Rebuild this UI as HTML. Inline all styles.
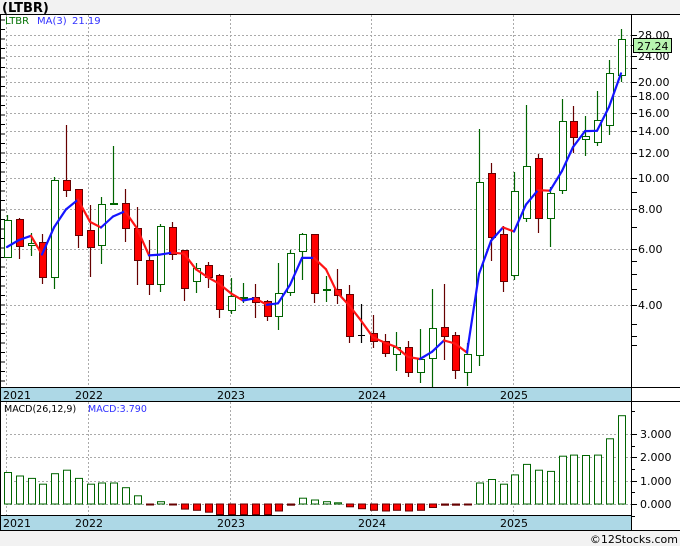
<!DOCTYPE html>
<html><head><meta charset="utf-8"><style>
body{margin:0;background:#fff;width:680px;height:546px;overflow:hidden;font-family:"Liberation Sans","DejaVu Sans",sans-serif}
svg{display:block}
</style></head><body>
<svg id="s" width="680" height="546" xmlns="http://www.w3.org/2000/svg" font-family="DejaVu Sans, Liberation Sans, sans-serif">
<rect x="0" y="0" width="680" height="546" fill="#fff"/>
<rect x="0" y="0" width="680" height="14" fill="#f2f2f2"/>
<rect x="0" y="531" width="680" height="15" fill="#f2f2f2"/>
<text x="2" y="12" font-size="13" font-weight="bold" fill="#000">(LTBR)</text>
<g id="g"></g>
<text x="5" y="24" font-size="10" fill="#007000">LTBR</text>
<text x="37" y="24" font-size="10" fill="#3030ff">MA(3)</text>
<text x="72" y="24" font-size="10" fill="#3030ff">21.19</text>
<text x="4" y="412" font-size="9.5" fill="#000">MACD(26,12,9)</text>
<text x="88" y="412" font-size="9.5" fill="#3030ff">MACD:3.790</text>
<text x="678" y="543" font-size="11" fill="#000" text-anchor="end">©12Stocks.com</text>
</svg>
<script>
var g=document.getElementById('g'),h='';
function Y(p){return 305-138.75*Math.log(p/4);}
function P(y){return 4*Math.exp((305-y)/138.75);}
// grid
[28,26,24,22,20,18,16,14,12,10,8,6,4].forEach(function(p){var y=Math.round(Y(p))+.5;h+='<line x1="6" x2="631" y1="'+y+'" y2="'+y+'" stroke="#aaa" stroke-dasharray="2,2"/>';});
[6,88,230,371,513].forEach(function(x){h+='<line x1="'+(x+.5)+'" x2="'+(x+.5)+'" y1="15" y2="387" stroke="#aaa" stroke-dasharray="2,2"/><line x1="'+(x+.5)+'" x2="'+(x+.5)+'" y1="402" y2="515" stroke="#aaa" stroke-dasharray="2,2"/>';});
[3,2,1,0].forEach(function(v){var y=Math.round(504-23.3*v)+.5;h+='<line x1="6" x2="631" y1="'+y+'" y2="'+y+'" stroke="#aaa" stroke-dasharray="2,2"/>';});
// frame
h+='<line x1="0" x2="680" y1="14.5" y2="14.5" stroke="#000"/>';
h+='<line x1="0.5" x2="0.5" y1="14" y2="531" stroke="#000"/>';
h+='<line x1="631.5" x2="631.5" y1="14" y2="531" stroke="#000"/>';
// ticks
for(var y=20;y<387;y+=9.5)h+='<line x1="0" x2="5" y1="'+y+'" y2="'+y+'" stroke="#000"/>';
[28,26,24,22,20,18,16,14,12,10,9,8,7,6,5.5,5,4.5,4,3.5,3.2,3].forEach(function(p){var y=Math.round(Y(p))+.5;h+='<line x1="631" x2="637" y1="'+y+'" y2="'+y+'" stroke="#000"/>';});
[28,24,20,18,16,14,12,10,8,6,4].forEach(function(p){var y=Math.round(Y(p))+4;h+='<text x="638" y="'+y+'" font-size="11" fill="#000">'+(p.toFixed(2))+'</text>';});
// bands
h+='<rect x="1" y="387" width="630" height="14" fill="#add8e6"/><line x1="0" x2="680" y1="387.5" y2="387.5" stroke="#000"/><line x1="0" x2="680" y1="401.5" y2="401.5" stroke="#000"/>';
h+='<rect x="1" y="515" width="630" height="15" fill="#add8e6"/><line x1="0" x2="631" y1="515.5" y2="515.5" stroke="#000"/><line x1="0" x2="680" y1="530.5" y2="530.5" stroke="#000"/>';
[['2021',3],['2022',75],['2023',217],['2024',358],['2025',500]].forEach(function(a){h+='<text x="'+a[1]+'" y="399" font-size="11" fill="#000">'+a[0]+'</text><text x="'+a[1]+'" y="527" font-size="11" fill="#000">'+a[0]+'</text>';});
[[3,'3.000'],[2,'2.000'],[1,'1.000'],[0,'0.000']].forEach(function(a){var y=Math.round(504-23.3*a[0]);h+='<line x1="631" x2="637" y1="'+(y+.5)+'" y2="'+(y+.5)+'" stroke="#000"/><text x="640" y="'+(y+4)+'" font-size="11" fill="#000">'+a[1]+'</text>';});
[411,446,469,492,516].forEach(function(y){h+='<line x1="631" x2="635" y1="'+(y+.5)+'" y2="'+(y+.5)+'" stroke="#000"/>';});
// candles: [green?, bodyTop, bodyBot, hi, lo]
var C=[[1,220,257,215,257],[0,219,246,218,259],[1,243,245,233,256],[0,242,277,234,284],[1,180,277,177,289],[0,180,190,125,197],[0,189,235,189,248],[0,230,247,205,277],[1,204,245,197,264],[1,203,204,146,205],[0,203,228,189,242],[0,228,260,207,285],[0,260,284,240,295],[1,226,284,224,292],[0,227,254,222,260],[0,250,288,250,301],[1,268,281,263,293],[0,265,277,262,288],[0,275,309,274,318],[1,296,310,278,314],[1,297,297,283,303],[0,297,302,284,318],[0,301,316,300,321],[1,293,316,263,330],[1,253,292,250,296],[1,234,251,233,280],[0,234,293,234,303],[1,289,289,276,302],[0,289,295,269,304],[0,294,336,285,343],[2,335,335,304,343],[0,333,341,315,348],[0,341,353,334,357],[1,347,354,332,371],[0,347,372,341,377],[1,359,372,329,383],[1,328,358,289,387],[0,327,336,284,360],[0,335,370,332,379],[1,354,372,343,386],[1,182,355,129,366],[0,173,237,163,261],[0,234,281,226,292],[1,191,275,172,280],[1,166,218,105,222],[0,158,218,154,233],[1,193,218,187,247],[1,121,190,99,194],[0,121,137,106,153],[1,136,139,116,156],[1,120,142,91,146],[1,73,125,60,135],[1,39,75,29,82]];
var M=[1.35,1.2,1.1,.85,1.3,1.45,1.1,.85,.9,.9,.7,.35,-.02,.1,-.02,-.22,-.27,-.35,-.45,-.45,-.45,-.45,-.45,-.3,-.05,.25,.17,.1,.05,-.12,-.2,-.27,-.3,-.27,-.3,-.27,-.15,-.05,-.05,-.03,.9,1.05,.85,1.25,1.7,1.45,1.4,2.05,2.1,2.08,2.1,2.8,3.79];
var X=function(i){return Math.round(7+i*11.8);};
var closes=[];
C.forEach(function(c,i){var x=X(i);closes.push(P(c[0]==0?c[2]:c[1]));
 var col=c[0]==1?'#006400':(c[0]==0?'#660000':'#000');
 h+='<line x1="'+(x+.5)+'" x2="'+(x+.5)+'" y1="'+c[3]+'" y2="'+c[4]+'" stroke="'+col+'" stroke-width="1.2"/>';
 var bh=Math.max(1,c[2]-c[1]);
 if(c[0]==2){h+='<line x1="'+(x-3)+'" x2="'+(x+4)+'" y1="'+(c[1]+.5)+'" y2="'+(c[1]+.5)+'" stroke="#000"/>';}
 else h+='<rect x="'+(x-3)+'.5" y="'+(c[1]+.5)+'" width="7" height="'+bh+'" fill="'+(c[0]==1?'#fff':'#f00')+'" stroke="'+col+'"/>';
});
// MA
var ma=[];for(var i=0;i<closes.length;i++){var a=closes.slice(Math.max(0,i-2),i+1);ma.push(a.reduce(function(s,v){return s+v;},0)/a.length);}
ma[0]=P(247);ma[1]=P(240);
for(var i=1;i<ma.length;i++){var col=ma[i]>=ma[i-1]?'#1515ff':'#ff1515';h+='<line x1="'+X(i-1)+'" y1="'+Y(ma[i-1]).toFixed(1)+'" x2="'+X(i)+'" y2="'+Y(ma[i]).toFixed(1)+'" stroke="'+col+'" stroke-width="2.2" stroke-linecap="round"/>';}
// MACD
M.forEach(function(v,i){var x=X(i);var z=504,t=z-23.3*v;
 if(v>=0){h+='<rect x="'+(x-3)+'.5" y="'+t.toFixed(1)+'" width="7" height="'+(z-t).toFixed(1)+'" fill="#fff" stroke="#006400"/>';}
 else {var hh=(t-z);h+='<rect x="'+(x-3)+'.5" y="'+z+'" width="7" height="'+Math.max(1,hh).toFixed(1)+'" fill="'+(hh<2?'#660000':'#f00')+'" stroke="#660000"/>';}
});
// price box
h+='<rect x="633.5" y="38.5" width="38" height="14" fill="#b8f5b0" stroke="#000"/><text x="637" y="50" font-size="11" fill="#000">27.24</text>';
g.innerHTML=h;
</script>
</body></html>
